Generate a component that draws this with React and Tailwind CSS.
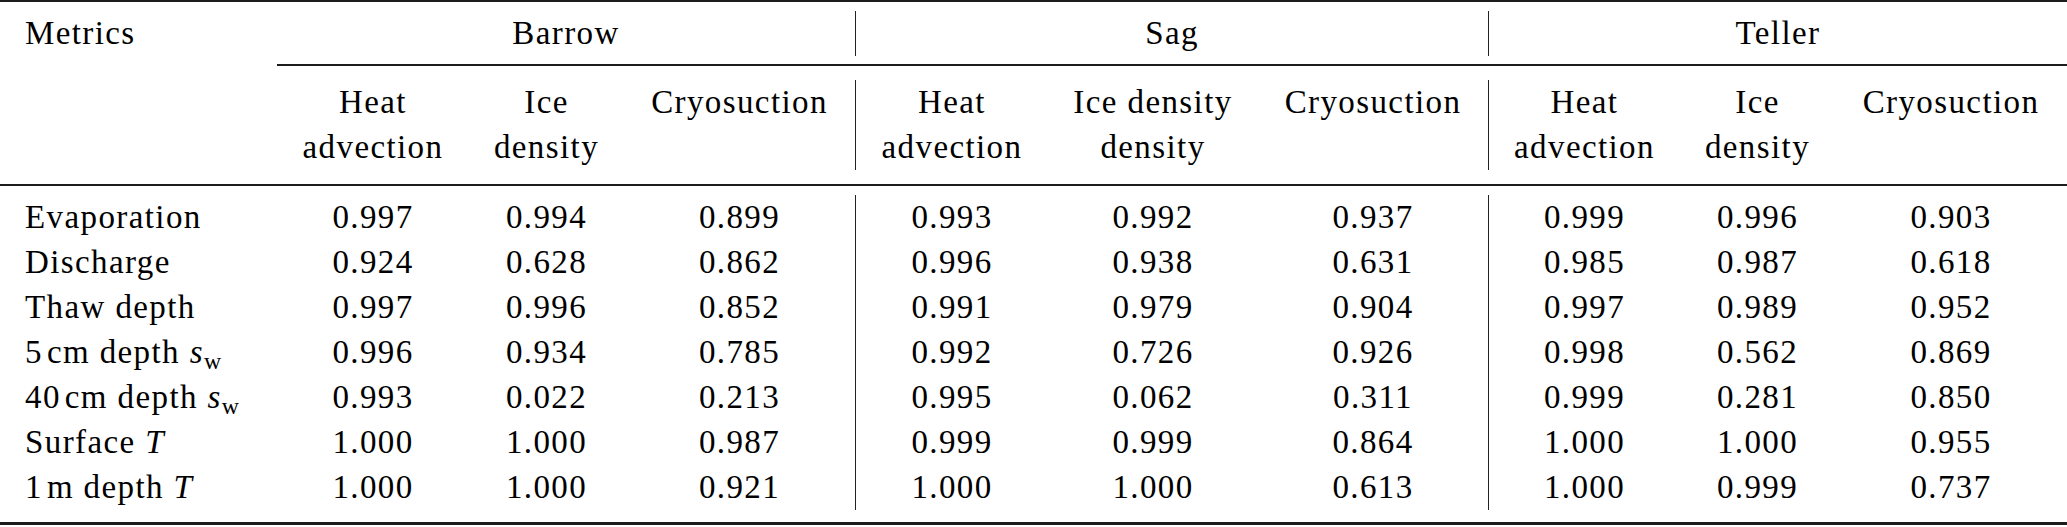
// serif face applied on every text cell; font-serif on the wrapper is the fallback
const serifFont = "[font-family:Liberation_Serif]"

const groups = [
  {
    name: "Barrow",
    border: "",
    heads: [["Heat", "advection"], ["Ice", "density"], ["Cryosuction"]],
    widths: ["w-[192px]", "w-[155px]", "w-[231px]"],
    width: "w-[578px]",
  },
  {
    name: "Sag",
    border: "border-l border-[#222]",
    heads: [["Heat", "advection"], ["Ice density", "density"], ["Cryosuction"]],
    widths: ["w-[192px]", "w-[210px]", "w-[230px]"],
    width: "w-[633px]",
  },
  {
    name: "Teller",
    border: "border-l border-[#222]",
    heads: [["Heat", "advection"], ["Ice", "density"], ["Cryosuction"]],
    widths: ["w-[191px]", "w-[155px]", "w-[232px]"],
    width: "w-[579px]",
  },
]

const Sw = () => (
  <>
    <i>s</i>
    <sub className="text-[0.72em] tracking-normal">w</sub>
  </>
)

const rows = [
  { label: "Evaporation", values: ["0.997", "0.994", "0.899", "0.993", "0.992", "0.937", "0.999", "0.996", "0.903"] },
  { label: "Discharge", values: ["0.924", "0.628", "0.862", "0.996", "0.938", "0.631", "0.985", "0.987", "0.618"] },
  { label: "Thaw depth", values: ["0.997", "0.996", "0.852", "0.991", "0.979", "0.904", "0.997", "0.989", "0.952"] },
  {
    label: (
      <>
        5<span className="ml-[4px]">cm depth </span>
        <Sw />
      </>
    ),
    values: ["0.996", "0.934", "0.785", "0.992", "0.726", "0.926", "0.998", "0.562", "0.869"],
  },
  {
    label: (
      <>
        40<span className="ml-[4px]">cm depth </span>
        <Sw />
      </>
    ),
    values: ["0.993", "0.022", "0.213", "0.995", "0.062", "0.311", "0.999", "0.281", "0.850"],
  },
  {
    label: (
      <>
        Surface <i>T</i>
      </>
    ),
    values: ["1.000", "1.000", "0.987", "0.999", "0.999", "0.864", "1.000", "1.000", "0.955"],
  },
  {
    label: (
      <>
        1<span className="ml-[4px]">m depth </span>
        <i>T</i>
      </>
    ),
    values: ["1.000", "1.000", "0.921", "1.000", "1.000", "0.613", "1.000", "0.999", "0.737"],
  },
]

function Rule({ className }) {
  return <div className={`bg-[#1c1c1c] ${className}`} />
}

export default function App() {
  return (
    <div className="w-[2067px] h-[527px] bg-white text-black font-serif text-[33px] leading-[45px] tracking-[1.4px]">
      <Rule className="h-[2px]" />

      {/* site names */}
      <div className="flex pt-[9px] pb-[8px]">
        <div className={`w-[277px] pl-[25px] ${serifFont}`}>Metrics</div>
        {groups.map((g) => (
          <div key={g.name} className={`${g.width} ${g.border} text-center ${serifFont}`}>
            {g.name}
          </div>
        ))}
      </div>

      <Rule className="h-[2px] ml-[277px]" />

      {/* experiment names */}
      <div className="flex pt-[14px] pb-[14px]">
        <div className="w-[277px]" />
        {groups.map((g) => (
          <div key={g.name} className={`flex h-[90px] ${g.border}`}>
            {g.heads.map((lines, i) => (
              <div key={i} className={`${g.widths[i]} shrink-0 text-center`}>
                {lines.map((l) => (
                  <div key={l} className={serifFont}>
                    {l}
                  </div>
                ))}
              </div>
            ))}
          </div>
        ))}
      </div>

      <Rule className="h-[2px]" />

      <div className="pt-[9px] pb-[12px]">
        {rows.map((r, ri) => (
          <div key={ri} className="flex h-[45px]">
            <div className={`w-[277px] pl-[25px] whitespace-nowrap ${serifFont}`}>{r.label}</div>
            {groups.map((g, gi) => (
              <div key={g.name} className={`flex ${g.border}`}>
                {g.widths.map((w, i) => (
                  <div key={i} className={`${w} shrink-0 text-center ${serifFont}`}>
                    {r.values[gi * 3 + i]}
                  </div>
                ))}
              </div>
            ))}
          </div>
        ))}
      </div>

      <Rule className="h-[3px]" />
    </div>
  )
}
